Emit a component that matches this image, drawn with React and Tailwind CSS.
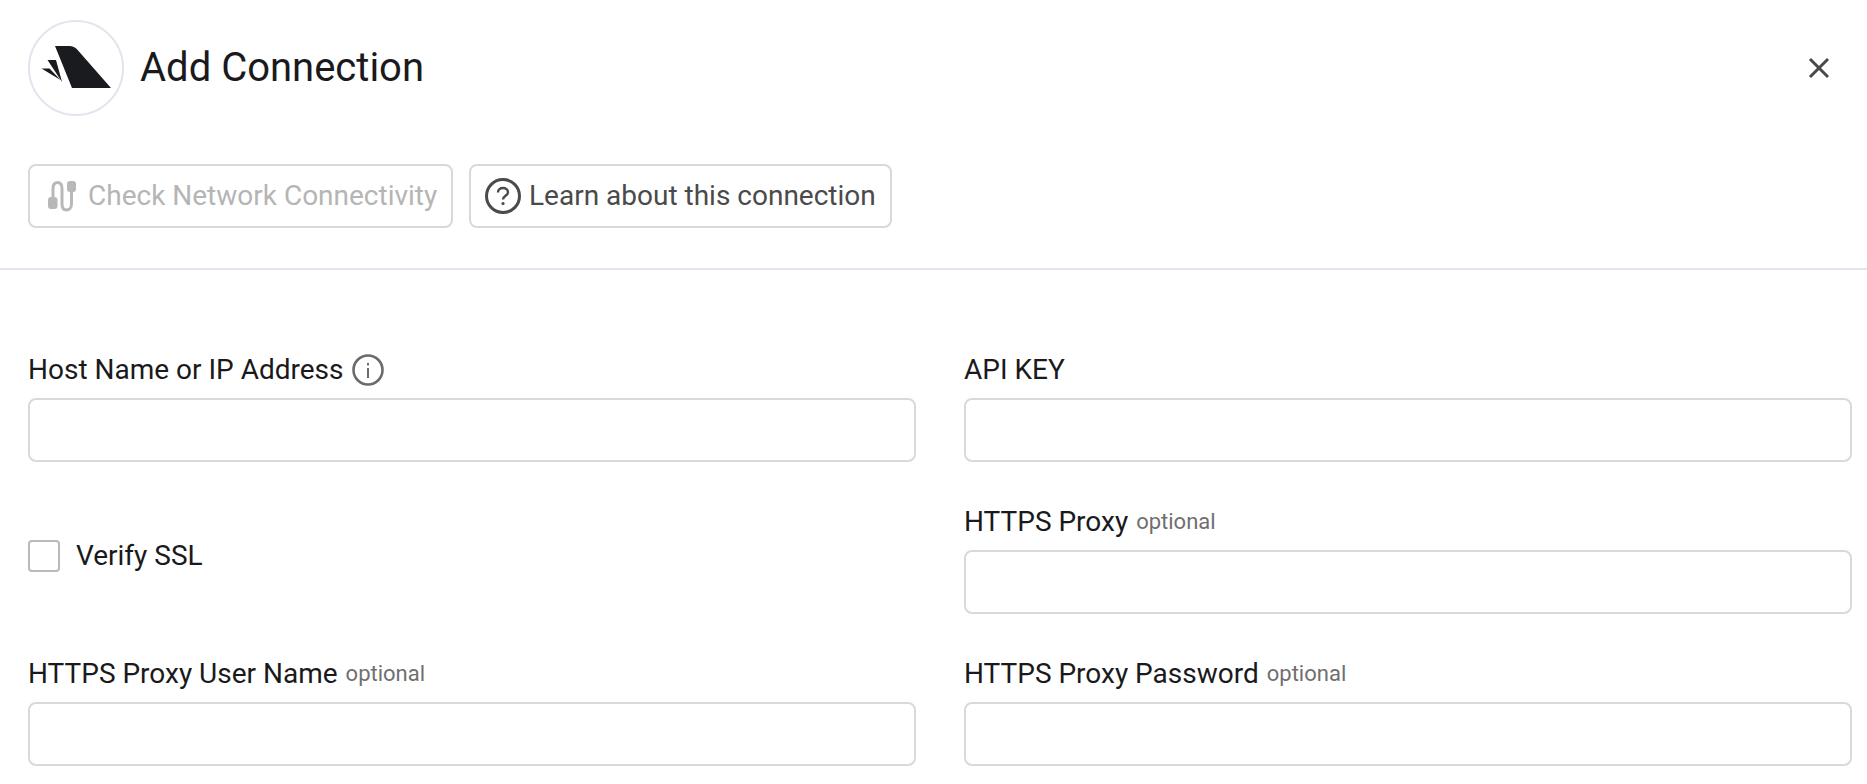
import { useState } from "react";

const roboto = "font-['Roboto',sans-serif]";

function Logo() {
  return (
    <div className="flex h-24 w-24 shrink-0 items-center justify-center rounded-full border-2 border-[#e1e5ee]">
      <svg width="96" height="96" viewBox="0 0 96 96" className="shrink-0">
        <path d="M27 26H41C45 26 48 27.5 50.5 31L83 68H44Z" fill="#1a1b1f" />
        <path d="M19.5 40H28L34 62Z" fill="#1a1b1f" />
        <path d="M13.5 48.5H21.5L32.5 60Z" fill="#1a1b1f" />
      </svg>
    </div>
  );
}

function PlugIcon() {
  return (
    <svg width="32" height="34" viewBox="0 0 32 34" className="shrink-0">
      <g fill="none" stroke="#b8b8b8" strokeWidth="3">
        <path d="M7 18V9.5C7 5.5 9 3.5 11.5 3.5S16 5.5 16 9.5V25C16 29 18 31 20.5 31S25.5 29 25.5 25V12" />
      </g>
      <rect x="2" y="18" width="9.5" height="12" rx="3" fill="#b8b8b8" />
      <rect x="21" y="2" width="9" height="11" rx="3" fill="#b8b8b8" />
    </svg>
  );
}

function HelpIcon() {
  return (
    <svg width="36" height="36" viewBox="0 0 36 36" className="shrink-0">
      <circle cx="18" cy="18" r="16.5" fill="none" stroke="#4a4a4a" strokeWidth="3" />
      <path d="M13 14.5C13 11.5 15.2 10 18 10S23 11.7 23 14.2C23 17.8 18 17.8 18 21.5" fill="none" stroke="#4a4a4a" strokeWidth="2.4" />
      <circle cx="18" cy="25.5" r="1.6" fill="#4a4a4a" />
    </svg>
  );
}

function InfoIcon() {
  return (
    <svg width="32" height="32" viewBox="0 0 32 32" className="shrink-0">
      <circle cx="16" cy="16" r="14.5" fill="none" stroke="#6b6b6b" strokeWidth="2.6" />
      <rect x="15" y="14" width="2" height="10" fill="#6b6b6b" />
      <rect x="15" y="9" width="2" height="2.4" fill="#6b6b6b" />
    </svg>
  );
}

function Field({ label, optional, info, value, onChange }) {
  return (
    <div>
      <label className="mb-3 flex h-8 items-center text-[28px] leading-8 text-[#1a1a1c]">
        {label}
        {optional && <span className="ml-2 text-[22px] text-[#6f6f6f]">optional</span>}
        {info && <span className="ml-2"><InfoIcon /></span>}
      </label>
      <input
        value={value}
        onChange={onChange}
        className="block h-16 w-full rounded-lg border-2 border-[#d9d9d9] bg-white px-4 text-[28px] outline-none"
      />
    </div>
  );
}

export default function App() {
  const [checked, setChecked] = useState(false);
  const [values, setValues] = useState({});
  const bind = (k) => ({
    value: values[k] || "",
    onChange: (e) => setValues({ ...values, [k]: e.target.value }),
  });

  return (
    <div className={`${roboto} h-[784px] overflow-hidden bg-white`}>
      <div className="flex items-center justify-between pt-5 pl-7 pr-[37px]">
        <div className="flex items-center gap-4">
          <Logo />
          <h1 className="text-[40px] leading-none text-[#1a1a1c]">Add Connection</h1>
        </div>
        <button className="text-[#4a4a4a]">
          <svg width="22" height="22" viewBox="0 0 22 22">
            <path d="M2 2L20 20M20 2L2 20" stroke="currentColor" strokeWidth="3" />
          </svg>
        </button>
      </div>

      <div className="mt-12 flex gap-4 px-7">
        <button disabled className="flex h-16 w-[425px] items-center gap-[10px] rounded-lg border-2 border-[#d9d9d9] pl-[16px] text-[28px] whitespace-nowrap text-[#b5b5b5]">
          <PlugIcon />
          Check Network Connectivity
        </button>
        <button className="flex h-16 w-[423px] items-center gap-[8px] rounded-lg border-2 border-[#d9d9d9] pl-[14px] text-[28px] whitespace-nowrap text-[#4a4a4a]">
          <HelpIcon />
          Learn about this connection
        </button>
      </div>

      <hr className="mt-10 border-t-2 border-[#e1e5ee]" />

      <div className="mt-[84px] grid grid-cols-2 gap-x-12 gap-y-11 pl-7 pr-[15px]">
        <Field label="Host Name or IP Address" info {...bind("host")} />
        <Field label="API KEY" {...bind("key")} />
        <label className="flex items-center gap-4 pb-2">
          <input
            type="checkbox"
            checked={checked}
            onChange={(e) => setChecked(e.target.checked)}
            className="h-8 w-8 appearance-none rounded border-2 border-[#b9b9b9] bg-white"
          />
          <span className="text-[28px] text-[#1a1a1c]">Verify SSL</span>
        </label>
        <Field label="HTTPS Proxy" optional {...bind("proxy")} />
        <Field label="HTTPS Proxy User Name" optional {...bind("proxyUser")} />
        <Field label="HTTPS Proxy Password" optional {...bind("proxyPass")} />
      </div>
    </div>
  );
}
